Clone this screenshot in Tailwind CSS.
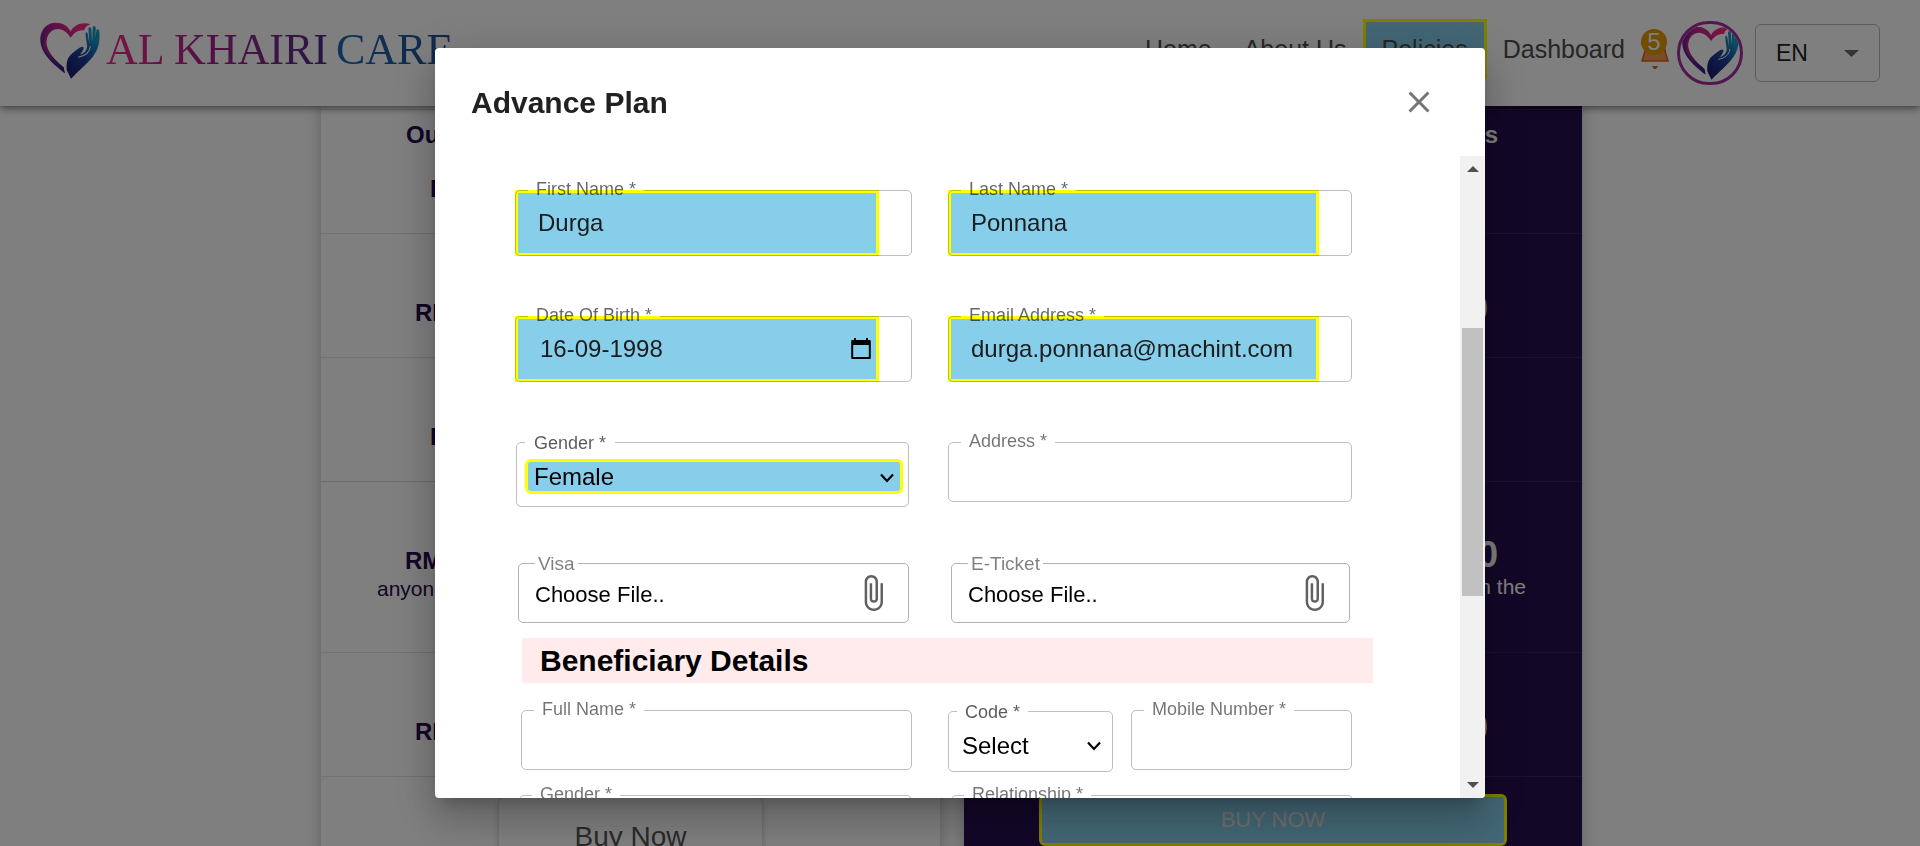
<!DOCTYPE html>
<html lang="en">
<head>
<meta charset="utf-8">
<title>Al Khairi Care</title>
<script src="https://cdn.jsdelivr.net/npm/@tailwindcss/browser@4"></script>
</head>
<body class="h-screen overflow-hidden bg-white font-['Liberation_Sans',Arial,sans-serif] text-black">

<!-- Shared heart-and-hand mark -->
<svg class="absolute size-0" aria-hidden="true">
  <defs>
    <linearGradient id="heartFill" x1="0" y1="1" x2="1" y2="0">
      <stop offset="0.1" stop-color="#2b2a86"/><stop offset="0.45" stop-color="#8c1f8e"/><stop offset="0.8" stop-color="#f02a86"/>
    </linearGradient>
    <linearGradient id="heartInner" x1="0" y1="0" x2="0.4" y2="1">
      <stop offset="0" stop-color="#c4248c"/><stop offset="0.5" stop-color="#b0207f"/><stop offset="1" stop-color="#33207f"/>
    </linearGradient>
    <linearGradient id="handFill" x1="0.2" y1="1" x2="0.9" y2="0">
      <stop offset="0.1" stop-color="#1c2377"/><stop offset="0.45" stop-color="#1f3f9c"/><stop offset="0.8" stop-color="#1797c4"/>
    </linearGradient>
    <symbol id="mark" viewBox="30 34 182 170" preserveAspectRatio="none">
      <path fill="url(#heartFill)" d="M105 187C70 160 28 126 31 81C34 52 54 36 77 36C99 36 114 46 123 62C132 44 158 32 183 41C171 45 167 50 164 59C146 58 134 65 123 81C113 66 100 54 82 55C58 57 45 82 49 105C55 136 84 155 102 170Z"/>
      <path fill="url(#heartInner)" d="M105 187C84 164 52 138 43 110C37 88 48 62 74 52C54 66 47 84 51 105C58 134 86 155 102 170Z"/>
      <path fill="url(#handFill)" d="M124 203L111 177C109 150 115 137 130 126C142 117 153 106 160 108C167 112 158 122 152 132C166 126 171 119 173 108L168 72C167 63 174 62 175 70L180 100L177 56C177 47 186 48 186 56L188 96L190 52C191 43 200 45 199 54L198 82L201 60C203 52 211 55 210 64C212 88 209 112 195 130C178 156 148 178 124 203Z"/>
      <path fill="none" stroke="#fff" stroke-width="3" d="M146 139C168 135 181 124 183 106"/>
    </symbol>
  </defs>
</svg>

<header class="relative z-10 flex h-[106px] items-center justify-between bg-white pr-10 pl-10 shadow-[0_2px_8px_rgba(0,0,0,0.55)]">
  <a href="#" class="flex items-center gap-1.5 pb-1.5" aria-label="Al Khairi Care">
    <svg class="h-[57px] w-[60px]"><use href="#mark"/></svg>
    <span class="flex gap-2 font-['Liberation_Serif',serif] text-[44px] leading-[50px]">
      <span class="bg-linear-to-r from-[#f02a86] via-[#a32089] to-[#4b2a86] bg-clip-text text-transparent">AL KHAIRI</span>
      <span class="bg-linear-to-r from-[#1f68ad] to-[#1f4f96] bg-clip-text text-transparent">CARE</span>
    </span>
  </a>
  <div class="flex items-center">
    <nav class="flex items-center pb-2 text-[25px] leading-[30px] text-[#4d4d4d]">
      <a href="#" class="px-4">Home</a>
      <a href="#" class="px-4">About Us</a>
      <a href="#" class="border-3 border-[#ff0] bg-[#87ceeb] px-4 py-3">Policies</a>
      <a href="#" class="px-4">Dashboard</a>
    </nav>
    <button class="relative mr-2 mb-2 flex h-10 w-7 justify-center" aria-label="Notifications">
      <svg class="h-10 w-7" viewBox="0 0 28 40"><path d="M5 12h18l1 10 3 10H1l3-10z" fill="#f59a50" stroke="#d8601c" stroke-width="1.5"/><path d="M11 37h6l-2 3h-2z" fill="#d8601c"/></svg>
      <span class="absolute top-0 left-0 flex size-[26px] items-center justify-center rounded-full bg-[#e09a00] text-[24px] text-white">5</span>
    </button>
    <a href="#" class="mr-3 flex h-16 w-[66px] items-center justify-center overflow-hidden rounded-full border-3 border-[#a32ea3]" aria-label="Profile">
      <svg class="h-[54px] w-[57px]"><use href="#mark"/></svg>
    </a>
    <div class="relative">
      <select aria-label="Language" class="h-[58px] w-[125px] appearance-none rounded-md border border-[#b8b8b8] pl-5 text-[23px] text-[#222]"><option>EN</option></select>
      <svg class="pointer-events-none absolute top-[26px] right-[21px] h-[7px] w-[15px]" viewBox="0 0 15 7"><path d="M0 0h15L7.500 7z" fill="#6a6a6a"/></svg>
    </div>
  </div>
</header>

<main class="pr-[17px]">
  <div class="mx-auto grid max-w-[1261px] grid-cols-2 gap-6">
    <section class="text-[24px] leading-7 font-bold text-[#26094e] shadow-[0_0_14px_rgba(0,0,0,0.25)]">
      <div class="h-1 border-b border-[#e4e4e4]"></div>
      <div class="flex h-31 flex-col border-b border-[#e4e4e4] pt-[11px]"><span class="pl-[85px]">Ou</span><span class="mt-[26px] pl-[109px]">R</span></div>
      <div class="h-31 border-b border-[#e4e4e4] pt-[65px] pl-[94px]">RM</div>
      <div class="h-31 border-b border-[#d8dce6] pt-[65px] pl-[109px]">RM</div>
      <div class="flex h-[171px] flex-col border-b border-[#e4e4e4] pt-[65px]"><span class="pl-[84px]">RM</span><span class="pl-14 text-[21px] font-normal">anyone</span></div>
      <div class="h-31 border-b border-[#e4e4e4] pt-[65px] pl-[94px]">RM</div>
      <button class="mt-5 ml-[178px] h-20 w-[263px] rounded-lg text-[28px] font-normal text-[#555] shadow-[0_0_6px_rgba(0,0,0,0.25)]">Buy Now</button>
    </section>
    <section class="bg-[#260e50] text-right text-[24px] leading-7 font-bold text-white shadow-[0_0_14px_rgba(0,0,0,0.25)]">
      <div class="h-1 border-b border-[#38245c]"></div>
      <div class="h-31 border-b border-[#38245c] pt-[11px] pr-[84px]">s</div>
      <div class="h-31 border-b border-[#38245c] pt-[61px] pr-[94px] text-[36px]">0</div>
      <div class="h-31 border-b border-[#38245c]"></div>
      <div class="flex h-[171px] flex-col border-b border-[#38245c] pt-[59px]"><span class="pr-[84px] text-[36px]">0</span><span class="mt-1 pr-14 text-[21px] font-normal">n the</span></div>
      <div class="h-31 border-b border-[#38245c] pt-[61px] pr-[94px] text-[36px]">0</div>
      <button class="mt-[17px] mr-[75px] h-[52px] w-[468px] rounded-md border-3 border-[#ff0] bg-[#87ceeb] text-[22px] font-normal text-[#e0e0e0]">BUY NOW</button>
    </section>
  </div>
</main>

<div class="fixed inset-0 z-20 flex items-center justify-center bg-black/50 py-12">
  <div role="dialog" aria-labelledby="dlg-title" class="flex h-full w-full max-w-[1050px] flex-col overflow-hidden rounded bg-white shadow-[0_11px_15px_-7px_rgba(0,0,0,0.2),0_24px_38px_3px_rgba(0,0,0,0.14),0_9px_46px_8px_rgba(0,0,0,0.12)]">
    <div class="flex h-27 shrink-0 items-center justify-between pr-12 pl-9">
      <h2 id="dlg-title" class="pt-0.5 text-[30px] leading-10 font-bold text-[#212121]">Advance Plan</h2>
      <button aria-label="Close"><svg class="size-9" viewBox="0 0 24 24" fill="#757575"><path d="M19 6.410 17.590 5 12 10.590 6.410 5 5 6.410 10.590 12 5 17.590 6.410 19 12 13.410 17.590 19 19 17.590 13.410 12z"/></svg></button>
    </div>

    <div class="flex min-h-0 flex-1">
      <form class="min-w-0 flex-1 overflow-hidden pt-[34px] pr-[108px] pl-20 text-[24px] text-[#1c1c1c]">

        <div class="grid grid-cols-[397fr_404fr] gap-x-9 gap-y-15">
          <div class="relative h-[66px] pr-[33px]">
            <input id="fn" type="text" value="Durga" class="h-full w-full border-3 border-[#ff0] bg-[#87ceeb] pl-5">
            <fieldset class="pointer-events-none absolute inset-0 rounded-[5px] border border-black/25"><legend class="ml-3 h-0 px-2 text-[18px] leading-[0] text-black/60"><label for="fn" class="-mt-0.5 block">First Name *</label></legend></fieldset>
          </div>
          <div class="relative h-[66px] pr-[33px]">
            <input id="ln" type="text" value="Ponnana" class="h-full w-full border-3 border-[#ff0] bg-[#87ceeb] pl-5">
            <fieldset class="pointer-events-none absolute inset-0 rounded-[5px] border border-black/25"><legend class="ml-3 h-0 px-2 text-[18px] leading-[0] text-black/60"><label for="ln" class="-mt-0.5 block">Last Name *</label></legend></fieldset>
          </div>
          <div class="relative h-[66px] pr-[33px]">
            <input id="dob" type="text" value="16-09-1998" class="h-full w-full border-3 border-[#ff0] bg-[#87ceeb] pl-[22px]">
            <button type="button" aria-label="Open calendar" class="absolute top-[21px] right-[41px]"><svg class="h-6 w-5" viewBox="0 0 20 24"><path d="M1.200 4h17.600v17H1.200z" fill="none" stroke="#000" stroke-width="2" stroke-linejoin="round"/><path d="M1 3h18v5H1zM3 1h2v3H3zM15 1h2v3h-2z" fill="#000"/></svg></button>
            <fieldset class="pointer-events-none absolute inset-0 rounded-[5px] border border-black/25"><legend class="ml-3 h-0 px-2 text-[18px] leading-[0] text-black/60"><label for="dob" class="-mt-0.5 block">Date Of Birth *</label></legend></fieldset>
          </div>
          <div class="relative h-[66px] pr-[33px]">
            <input id="em" type="email" value="durga.ponnana@machint.com" class="h-full w-full border-3 border-[#ff0] bg-[#87ceeb] pl-5">
            <fieldset class="pointer-events-none absolute inset-0 rounded-[5px] border border-black/25"><legend class="ml-3 h-0 px-2 text-[18px] leading-[0] text-black/60"><label for="em" class="-mt-0.5 block">Email Address *</label></legend></fieldset>
          </div>
          <div class="relative mr-[3px] ml-px flex h-[65px] items-center pt-1 pr-1.5 pl-[9px]">
            <select id="gd" class="h-[35px] w-full appearance-none rounded-md border-3 border-[#ff0] bg-[#87ceeb] pl-1.5 leading-7 text-black"><option>Female</option></select>
            <svg class="pointer-events-none absolute top-[31px] right-[15px] h-2.5 w-3.5" viewBox="0 0 14 10"><path d="M1 1.500 7 8l6-6.500" fill="none" stroke="#000" stroke-width="2.200"/></svg>
            <fieldset class="pointer-events-none absolute inset-0 rounded-[5px] border border-black/25"><legend class="ml-2 h-0 px-[9px] text-[18px] leading-[0] text-black/65"><label for="gd">Gender *</label></legend></fieldset>
          </div>
          <div class="relative h-15">
            <input id="ad" type="text" class="h-full w-full px-5">
            <fieldset class="pointer-events-none absolute inset-0 rounded-[5px] border border-black/25"><legend class="ml-3 h-0 px-2 text-[18px] leading-[0] text-black/55"><label for="ad" class="-mt-0.5 block">Address *</label></legend></fieldset>
          </div>
        </div>

        <div class="mt-14 grid grid-cols-[397fr_404fr] gap-x-9 text-[22px] text-black">
          <div class="relative mx-[3px] h-15">
            <label for="visa" class="flex h-full items-center justify-between pr-[26px] pl-[17px]"><span class="pt-0.5">Choose File..</span>
              <svg class="h-9 w-5" viewBox="6 1 12 22" preserveAspectRatio="none" fill="#616161"><path d="M16.500 6v11.500c0 2.210-1.790 4-4 4s-4-1.790-4-4V5c0-1.380 1.120-2.500 2.500-2.500s2.500 1.120 2.500 2.500v10.500c0 .55-.45 1-1 1s-1-.45-1-1V6H10v9.500c0 1.380 1.120 2.500 2.500 2.500s2.500-1.120 2.500-2.500V5c0-2.210-1.790-4-4-4S7 2.790 7 5v12.500c0 3.040 2.460 5.500 5.500 5.500s5.500-2.460 5.500-5.500V6h-1.500z"/></svg></label>
            <input id="visa" type="file" class="sr-only">
            <fieldset class="pointer-events-none absolute inset-0 rounded-[5px] border border-black/30"><legend class="ml-4 h-0 px-[3px] text-[19px] leading-[0] text-black/50">Visa</legend></fieldset>
          </div>
          <div class="relative mr-0.5 ml-[3px] h-15">
            <label for="tick" class="flex h-full items-center justify-between pr-[26px] pl-[17px]"><span class="pt-0.5">Choose File..</span>
              <svg class="h-9 w-5" viewBox="6 1 12 22" preserveAspectRatio="none" fill="#616161"><path d="M16.500 6v11.500c0 2.210-1.790 4-4 4s-4-1.790-4-4V5c0-1.380 1.120-2.500 2.500-2.500s2.500 1.120 2.500 2.500v10.500c0 .55-.45 1-1 1s-1-.45-1-1V6H10v9.500c0 1.380 1.120 2.500 2.500 2.500s2.500-1.120 2.500-2.500V5c0-2.210-1.790-4-4-4S7 2.790 7 5v12.500c0 3.040 2.460 5.500 5.500 5.500s5.500-2.460 5.500-5.500V6h-1.500z"/></svg></label>
            <input id="tick" type="file" class="sr-only">
            <fieldset class="pointer-events-none absolute inset-0 rounded-[5px] border border-black/30"><legend class="ml-4 h-0 px-[3px] text-[19px] leading-[0] text-black/50">E-Ticket</legend></fieldset>
          </div>
        </div>

        <h3 class="mt-[15px] -mr-[21px] ml-[7px] bg-[#ffebec] pl-[18px] text-[30px] leading-[45px] font-bold text-black">Beneficiary Details</h3>

        <div class="mt-[27px] grid grid-cols-[397fr_404fr] gap-x-9 gap-y-[23px]">
          <div class="relative ml-1.5 h-15">
            <input id="bn" type="text" class="h-full w-full px-5">
            <fieldset class="pointer-events-none absolute inset-0 rounded-[5px] border border-black/25"><legend class="ml-3 h-0 px-2 text-[18px] leading-[0] text-black/55"><label for="bn" class="-mt-0.5 block">Full Name *</label></legend></fieldset>
          </div>
          <div class="grid grid-cols-[165fr_221fr] gap-[18px]">
            <div class="relative mt-px h-[61px]">
              <select id="cd" class="h-full w-full appearance-none pt-2 pl-3.5 text-black"><option>Select</option></select>
              <svg class="pointer-events-none absolute top-[30px] right-3 h-2.5 w-3.5" viewBox="0 0 14 10"><path d="M1 1.500 7 8l6-6.500" fill="none" stroke="#000" stroke-width="2.200"/></svg>
              <fieldset class="pointer-events-none absolute inset-0 rounded-[5px] border border-black/25"><legend class="ml-2 h-0 px-2 text-[18px] leading-[0] text-black/65"><label for="cd">Code *</label></legend></fieldset>
            </div>
            <div class="relative h-15">
              <input id="mb" type="tel" class="h-full w-full px-5">
              <fieldset class="pointer-events-none absolute inset-0 rounded-[5px] border border-black/25"><legend class="ml-3 h-0 px-2 text-[18px] leading-[0] text-black/55"><label for="mb" class="-mt-0.5 block">Mobile Number *</label></legend></fieldset>
            </div>
          </div>
          <div class="relative ml-1 h-15">
            <select id="g2" class="h-full w-full appearance-none px-5"></select>
            <fieldset class="pointer-events-none absolute inset-0 rounded-[5px] border border-black/25"><legend class="ml-3 h-0 px-2 text-[18px] leading-[0] text-black/55"><label for="g2" class="-mt-0.5 block">Gender *</label></legend></fieldset>
          </div>
          <div class="relative -mr-px ml-[3px] h-15">
            <select id="rl" class="h-full w-full appearance-none px-5"></select>
            <fieldset class="pointer-events-none absolute inset-0 rounded-[5px] border border-black/25"><legend class="ml-3 h-0 px-2 text-[18px] leading-[0] text-black/55"><label for="rl" class="-mt-0.5 block">Relationship *</label></legend></fieldset>
          </div>
        </div>
      </form>

      <!-- Scrollbar -->
      <div class="flex w-[25px] shrink-0 flex-col items-center bg-[#f1f1f1] py-2.5" aria-hidden="true">
        <svg class="h-1.5 w-3" viewBox="0 0 12 6"><path d="M0 6h12L6 0z" fill="#505050"/></svg>
        <div class="mt-[156px] h-67 w-[21px] bg-[#c1c1c1]"></div>
        <svg class="mt-auto h-1.5 w-3" viewBox="0 0 12 6"><path d="M0 0h12L6 6z" fill="#505050"/></svg>
      </div>
    </div>
  </div>
</div>
</body>
</html>
